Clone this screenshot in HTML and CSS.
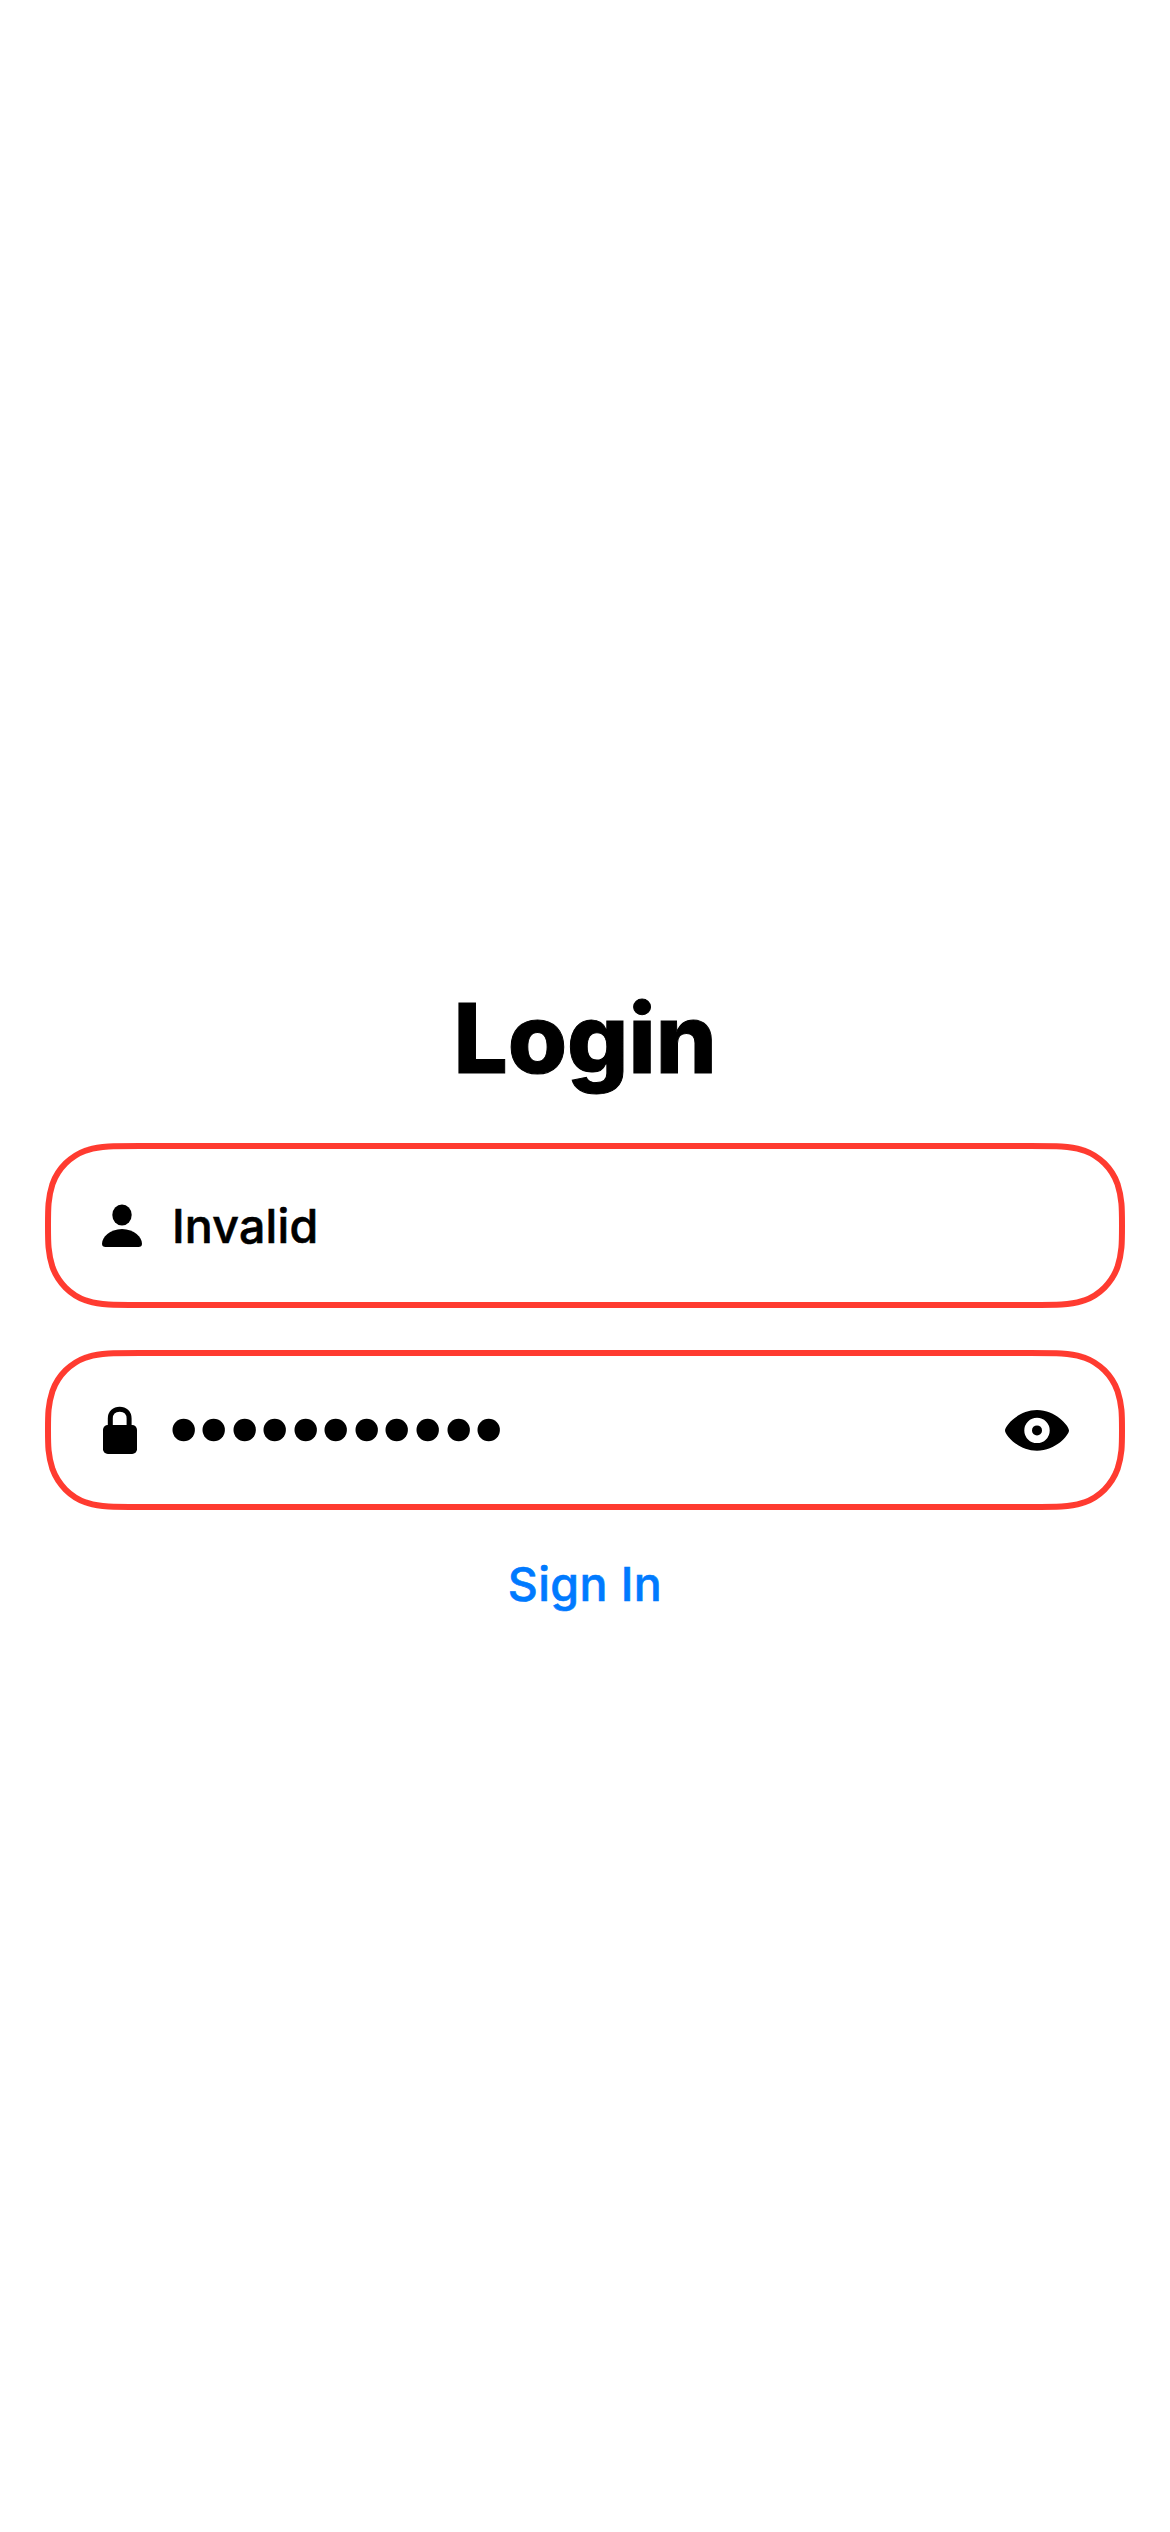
FILE: index.html
```html
<!DOCTYPE html>
<html lang="en">
<head>
<meta charset="utf-8">
<title>Login</title>
<link rel="stylesheet" href="styles.css">
</head>
<body>
<main class="login">
  <h1 class="title">Login</h1>
  <div class="field field-user">
    <svg class="outline" viewBox="0 0 1080 165" aria-hidden="true">
      <path d="M94.7 3H985.3C1011.7 3 1024.9 3 1036.8 6.9L1039.1 7.5C1054.6 13.1 1066.9 25.4 1072.5 40.9C1077 55.1 1077 65 1077 82.5C1077 100 1077 109.9 1072.5 124.1C1066.9 139.6 1054.6 151.9 1039.1 157.5L1036.8 158.1C1024.9 162 1011.7 162 985.3 162H94.7C68.3 162 55.1 162 43.2 158.1L40.9 157.5C25.4 151.9 13.1 139.6 7.5 124.1C3 109.9 3 100 3 82.5C3 65 3 55.1 7.5 40.9C13.1 25.4 25.4 13.1 40.9 7.5L43.2 6.9C55.1 3 68.3 3 94.7 3Z"/>
    </svg>
    <svg class="icon" viewBox="0 0 40 44" aria-hidden="true">
      <ellipse cx="20" cy="11" rx="9.7" ry="10.5"/>
      <path d="M3.6 43C1.3 43 0 41.8 0 39.7C0 33.5 7.7 25 20 25S40 33.5 40 39.7C40 41.8 38.7 43 36.4 43Z"/>
    </svg>
    <span class="value">Invalid</span>
  </div>
  <div class="field field-password">
    <svg class="outline" viewBox="0 0 1080 160" aria-hidden="true">
      <path d="M94.7 3H985.3C1011.7 3 1024.9 3 1036.8 6.9L1039.1 7.5C1054.6 13.1 1066.9 25.4 1072.5 40.9C1077 55.1 1077 64 1077 80C1077 96 1077 104.9 1072.5 119.1C1066.9 134.6 1054.6 146.9 1039.1 152.5L1036.8 153.1C1024.9 157 1011.7 157 985.3 157H94.7C68.3 157 55.1 157 43.2 153.1L40.9 152.5C25.4 146.9 13.1 134.6 7.5 119.1C3 104.9 3 96 3 80C3 64 3 55.1 7.5 40.9C13.1 25.4 25.4 13.1 40.9 7.5L43.2 6.9C55.1 3 68.3 3 94.7 3Z"/>
    </svg>
    <svg class="icon" viewBox="0 0 40 48" aria-hidden="true">
      <rect x="1" y="19" width="34" height="29" rx="4.8"/>
      <path class="shackle" d="M8.3 21V12.6C8.3 6.5 12.6 3.2 17.7 3.2S27.1 6.5 27.1 12.6V21"/>
    </svg>
    <svg class="dots" viewBox="0 0 328 24" role="img" aria-label="Password">
      <circle cx="11.7" cy="12" r="11.2"/>
      <circle cx="41.7" cy="12" r="11.2"/>
      <circle cx="72.7" cy="12" r="11.2"/>
      <circle cx="102.7" cy="12" r="11.2"/>
      <circle cx="133.7" cy="12" r="11.2"/>
      <circle cx="163.7" cy="12" r="11.2"/>
      <circle cx="194.7" cy="12" r="11.2"/>
      <circle cx="224.7" cy="12" r="11.2"/>
      <circle cx="255.7" cy="12" r="11.2"/>
      <circle cx="286.7" cy="12" r="11.2"/>
      <circle cx="316.7" cy="12" r="11.2"/>
    </svg>
    <svg class="eye" viewBox="0 0 64 42" aria-hidden="true">
      <path fill-rule="evenodd" d="M32 1C50.5 1 64 16.8 64 21.4S50.5 41.7 32 41.7S0 26 0 21.4S13.5 1 32 1ZM32 8.7A12.7 12.7 0 1 0 32 34.1A12.7 12.7 0 1 0 32 8.7Z"/>
      <circle cx="32" cy="21.4" r="5"/>
    </svg>
  </div>
  <button class="sign-in" type="button">Sign In</button>
</main>
</body>
</html>
```
FILE: styles.css
```css
body {
  margin: 0;
  background: #fff;
  color: #000;
  font-family: Inter, "Liberation Sans", sans-serif;
}

.login {
  box-sizing: border-box;
  width: 1170px;
  height: 2532px;
  padding: 978px 45px 0;
  display: flex;
  flex-direction: column;
  align-items: stretch;
}

.title {
  margin: 0 0 45px;
  font-size: 96px;
  line-height: 120px;
  font-weight: 800;
  text-align: center;
  -webkit-text-stroke: 1px currentColor;
}

.field {
  position: relative;
  box-sizing: border-box;
  display: flex;
  align-items: center;
  padding: 0 56px 0 57px;
}

.field-user {
  height: 165px;
  margin-bottom: 42px;
}

.field-password {
  height: 160px;
}

.outline {
  position: absolute;
  inset: 0;
  width: 100%;
  height: 100%;
  fill: none;
  stroke: #ff3b30;
  stroke-width: 6;
}

.icon {
  width: 40px;
  margin-right: 30px;
}

.shackle {
  fill: none;
  stroke: #000;
  stroke-width: 5;
}

.value {
  font-size: 46.5px;
  font-weight: 500;
  line-height: 60px;
  letter-spacing: 0.2px;
  -webkit-text-stroke: 0.6px currentColor;
}

.dots {
  width: 328px;
  height: 24px;
}

.eye {
  width: 64px;
  height: 42px;
  margin-left: auto;
}

.sign-in {
  align-self: center;
  margin: 44px 0 0;
  padding: 0;
  border: 0;
  background: none;
  color: #007aff;
  font: 500 46.5px/60px Inter, "Liberation Sans", sans-serif;
  letter-spacing: 0.4px;
  -webkit-text-stroke: 0.6px currentColor;
}
```
